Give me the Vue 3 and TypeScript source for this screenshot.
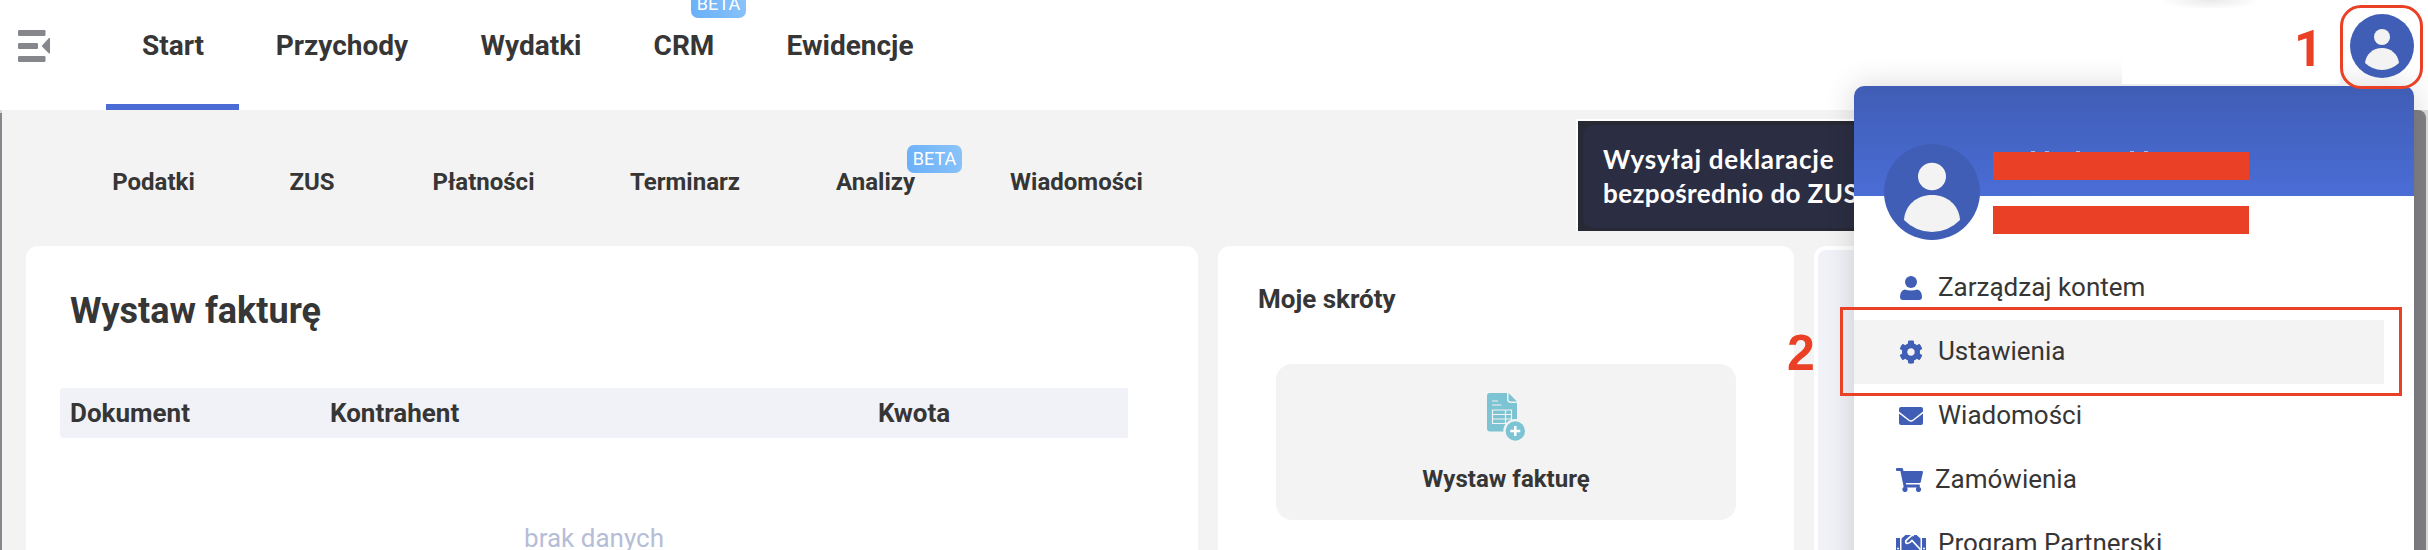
<script setup lang="ts">
interface NavItem { label: string; left: number; width: number; active?: boolean; beta?: boolean }
const mainNav: NavItem[] = [
  { label: 'Start', left: 142, width: 62, active: true },
  { label: 'Przychody', left: 276, width: 132 },
  { label: 'Wydatki', left: 481, width: 100 },
  { label: 'CRM', left: 653, width: 62, beta: true },
  { label: 'Ewidencje', left: 786, width: 128 },
]
const subNav: NavItem[] = [
  { label: 'Podatki', left: 112, width: 83 },
  { label: 'ZUS', left: 289, width: 46 },
  { label: 'Płatności', left: 432, width: 103 },
  { label: 'Terminarz', left: 630, width: 110 },
  { label: 'Analizy', left: 836, width: 79, beta: true },
  { label: 'Wiadomości', left: 1010, width: 133 },
]
// Distance between the end of the previous entry and the start of this one
const gap = (list: NavItem[], i: number): string =>
  `${list[i].left - (i ? list[i - 1].left + list[i - 1].width : 0)}px`

const menu = [
  { label: 'Zarządzaj kontem', icon: 'user' },
  { label: 'Ustawienia', icon: 'gear', active: true },
  { label: 'Wiadomości', icon: 'mail' },
  { label: 'Zamówienia', icon: 'cart' },
  { label: 'Program Partnerski', icon: 'partner' },
]
</script>

<template>
  <div class="screen">
    <header class="topbar">
      <svg class="burger" viewBox="0 0 32 32"><g fill="#86878d"><rect width="27.5" height="6" rx="1.2" /><rect y="13" width="20" height="6" rx="1.2" /><rect y="26" width="27.5" height="6" rx="1.2" /><path d="M32 8v15.5h-1L24 16.500v-1L31 8z" /></g></svg>
      <nav class="nav main">
        <a v-for="(n, i) in mainNav" :key="n.label" :class="{ active: n.active }" :style="{ marginLeft: gap(mainNav, i), width: n.width + 'px' }">{{ n.label }}<span v-if="n.beta" class="beta">BETA</span></a>
      </nav>
    </header>

    <main class="body">
      <div class="subbar">
        <nav class="nav sub">
          <a v-for="(n, i) in subNav" :key="n.label" :style="{ marginLeft: gap(subNav, i), width: n.width + 'px' }">{{ n.label }}<span v-if="n.beta" class="beta">BETA</span></a>
        </nav>
        <div class="banner"><div class="banner-in"><span>Wysyłaj deklaracje</span><br /><span class="l2">bezpośrednio do ZUS</span></div></div>
      </div>
      <div class="cards">
        <section class="card invoices">
          <h1>Wystaw fakturę</h1>
          <div class="thead"><span>Dokument</span><span>Kontrahent</span><span>Kwota</span></div>
          <p>brak danych</p>
        </section>
        <section class="card shortcuts">
          <h2>Moje skróty</h2>
          <div class="tile">
            <svg viewBox="0 0 40 50" width="40" height="50">
              <path fill="#7cc3d3" d="M3 0H20V6q0 4 4 4H30V38.500H3q-3 0-3-3V3Q0 0 3 0z" />
              <path fill="#7cc3d3" d="M21.500 0L30 8.500H24q-2.500 0-2.500-2.500z" />
              <path stroke="#f3f3f3" stroke-width="1.200" fill="none" d="M5 8h6M5 12h9.500M5.500 17h19v13.500h-19zM5.500 21.500h19M5.500 26h19M18.500 17v13.500" />
              <circle cx="28.300" cy="38" r="12" fill="#f3f3f3" /><circle cx="28.300" cy="38" r="9.700" fill="#7cc3d3" />
              <path d="M28.300 33v10M23.300 38h10" stroke="#fff" stroke-width="2.500" />
            </svg>
            <b>Wystaw fakturę</b>
          </div>
        </section>
        <section class="card promo"></section>
      </div>
    </main>
    <div class="edge left"></div>
    <div class="edge right"><i></i></div>

    <aside class="dropdown">
      <div class="head"></div>
      <ul>
        <li v-for="m in menu" :key="m.label" :class="[m.icon, { active: m.active }]">
          <span class="ic">
            <svg v-if="m.icon === 'user'" width="22" height="24" viewBox="0 0 22 24"><ellipse cx="11" cy="6" rx="6" ry="6" /><path d="M5 13.500q2 1 6 1t6-1q5 1 5 7.500 0 3-3 3H3q-3 0-3-3 0-6.500 5-7.500z" /></svg>
            <svg v-else-if="m.icon === 'gear'" width="24" height="24" viewBox="0 0 512 512"><path d="M487.400 315.700l-42.600-24.600c4.300-23.200 4.300-47 0-70.200l42.600-24.600c4.900-2.800 7.100-8.600 5.500-14-11.100-35.600-30-67.800-54.700-94.600-3.800-4.100-10-5.100-14.800-2.300L380.800 110c-17.900-15.400-38.500-27.300-60.800-35.100V25.800c0-5.600-3.900-10.500-9.400-11.700-36.700-8.200-74.300-7.800-109.200 0-5.500 1.200-9.400 6.100-9.400 11.700V75c-22.200 7.900-42.800 19.800-60.800 35.100L88.700 85.500c-4.900-2.800-11-1.900-14.800 2.300-24.700 26.700-43.600 58.900-54.700 94.600-1.700 5.400.6 11.200 5.500 14L67.300 221c-4.300 23.200-4.300 47 0 70.200l-42.600 24.600c-4.900 2.800-7.100 8.600-5.500 14 11.100 35.600 30 67.800 54.700 94.600 3.800 4.100 10 5.100 14.800 2.300l42.600-24.600c17.900 15.400 38.500 27.300 60.800 35.100v49.200c0 5.600 3.900 10.500 9.400 11.700 36.700 8.200 74.300 7.800 109.200 0 5.500-1.200 9.400-6.100 9.400-11.700v-49.200c22.200-7.900 42.800-19.800 60.800-35.100l42.600 24.600c4.900 2.800 11 1.900 14.800-2.300 24.700-26.700 43.600-58.900 54.700-94.600 1.500-5.500-.7-11.300-5.600-14.100zM256 336c-44.100 0-80-35.900-80-80s35.900-80 80-80 80 35.900 80 80-35.900 80-80 80z" /></svg>
            <svg v-else-if="m.icon === 'mail'" width="24" height="18" viewBox="0 0 24 18"><path d="M2 0h20q2 0 2 2v2.500L14 12.500q-2 1.500-4 0L0 4.500V2Q0 0 2 0zM0 6.500l9.500 7.300q2.500 1.700 5 0L24 6.500V16q0 2-2 2H2q-2 0-2-2z" /></svg>
            <svg v-else-if="m.icon === 'cart'" width="27" height="24" viewBox="0 0 576 512"><path d="M528.100 301.300l47.300-208C578.800 78.300 567.400 64 552 64H159.200l-9.200-44.800C147.800 8 137.900 0 126.500 0H24C10.700 0 0 10.700 0 24v16c0 13.300 10.700 24 24 24h69.900l70.200 343.400C147.300 417.100 136 435.200 136 456c0 30.900 25.100 56 56 56s56-25.100 56-56c0-15.700-6.400-29.800-16.800-40h209.600C430.400 426.200 424 440.300 424 456c0 30.900 25.100 56 56 56s56-25.100 56-56c0-22.200-12.900-41.300-31.600-50.400l5.500-24.300c3.400-15-8-29.300-23.400-29.300H218.100l-6.500-32h293.100c11.200 0 20.900-7.800 23.400-18.700z" /></svg>
            <svg v-else width="30" height="24" viewBox="0 -2 30 24"><path d="M0 4h4v15H0zM26 4h4v15h-4zM5.500 4.500L9.500 1h11l4 3.500V18l-3 4h-13l-3-4z" /><path d="M18 1.500h-2.500L10 6.500q-1 2.500 1.500 3 2 0 4.500-3l8.500 9" fill="none" stroke="#fff" stroke-width="1.700" /><circle cx="2" cy="14.500" r="1" fill="#fff" /><circle cx="28" cy="14.500" r="1" fill="#fff" /></svg>
          </span>{{ m.label }}
        </li>
      </ul>
    </aside>
    <div class="shade"></div>
    <div class="patch"></div>
    <div class="glow"></div>
    <div class="person"><svg viewBox="0 0 96 96"><circle cx="48" cy="48" r="48" fill="#405eb6" /><ellipse cx="48" cy="32.500" rx="14" ry="13.700" fill="#f3f3f3" /><path d="M20 76C21 61 33 51 48 51S75 61 76 76Q64 88 48 88T20 76z" fill="#f3f3f3" /></svg></div>
    <div class="ticks"><i></i><i></i><i></i><i></i><i></i></div>
    <div class="redact one"></div>
    <div class="redact two"></div>
    <div class="person small"><svg viewBox="0 0 96 96"><circle cx="48" cy="48" r="48" fill="#405eb6" /><ellipse cx="48" cy="34.500" rx="12" ry="12" fill="#f3f3f3" /><path d="M22.500 73.500C24 60 35 51 48 51S72 60 73.500 73.500Q62 84 48 84T22.500 73.500z" fill="#f3f3f3" /></svg></div>
    <div class="frame avatar-frame"></div>
    <div class="frame item-frame"></div>
    <span class="num n1">1</span>
    <span class="num n2">2</span>
  </div>
</template>

<style>
body { margin: 0; overflow: hidden; }
</style>
<style scoped>
* { box-sizing: border-box; }
.screen { position: relative; width: 2428px; height: 550px; overflow: hidden; background: #f3f3f3; font-family: Roboto, "Liberation Sans", sans-serif; color: #363636; }
.topbar { height: 110px; background: #fff; display: flex; position: relative; }
.burger { width: 32px; height: 32px; margin: 30px 0 0 18px; }
.nav { display: flex; font-weight: 700; white-space: nowrap; }
.nav a { position: relative; flex: none; display: flex; justify-content: center; }
.main { margin-left: -50px; font-size: 28px; line-height: 92px; }
.main .active::after { content: ""; position: absolute; left: -36px; right: -35px; bottom: 0; height: 6px; background: #4a6cd4; }
.beta { position: absolute; width: 55px; height: 28px; border-radius: 7px; background: linear-gradient(70deg, #69aff8, #8cc4f9); color: #fff; font-size: 18px; line-height: 28px; font-weight: 400; text-align: center; }
.main .beta { left: 38px; top: -10px; }
.sub .beta { left: 71px; top: 35px; }
.subbar { display: flex; height: 136px; }
.sub { width: 1576px; font-size: 24px; line-height: 145px; }
.banner { width: 600px; height: 112px; margin-top: 9px; border: 2px solid #fff; border-bottom: 0; background: #272934; padding: 4px 5px; }
.banner-in { height: 103px; border-radius: 10px; background: #2b2d42; color: #fff; padding: 18px 20px; font: 700 26px/33.500px Lato, sans-serif; white-space: nowrap; }
.banner-in span { letter-spacing: .75px; }
.banner-in .l2 { letter-spacing: .4px; }
.cards { display: flex; gap: 20px; padding-left: 26px; height: 304px; }
.card { background: #fff; border-radius: 12px 12px 0 0; flex: none; }
.invoices { width: 1172px; padding: 51px 70px 0 34px; }
h1 { margin: 0 0 0 10px; font-size: 36px; line-height: 28px; }
.thead { margin-top: 63px; height: 50px; display: grid; grid-template-columns: 260px 548px 1fr; padding-left: 10px; border-radius: 4px 0 0 4px; background: #f1f2f8; font-size: 26px; font-weight: 700; line-height: 50px; }
.invoices p { margin: 84px 0 0; text-align: center; font-size: 26px; line-height: 32px; color: #b6bdd7; }
.shortcuts { width: 576px; padding: 38px 58px 0; }
h2 { margin: 0 0 0 -18px; font-size: 26px; line-height: 31px; }
.tile { margin-top: 49px; height: 156px; border-radius: 16px; background: #f3f3f3; display: flex; flex-direction: column; align-items: center; padding-top: 29px; font-size: 24px; line-height: 28px; }
.tile svg { margin-right: -2px; }
.tile b { margin-top: 22px; }
.promo { width: 580px; border: 4px solid #fff; border-bottom: 0; background: #f0f2f8; }
.edge { position: absolute; top: 110px; height: 440px; }
.edge.left { left: 0; width: 2px; background: #86868c; border-top: 3px solid #d8d8da; }
.edge.right { left: 2414px; width: 14px; background: #dededf; }
.edge.right i { display: block; width: 12px; height: 440px; background: #818186; border-radius: 0 8px 0 0; }
.dropdown { position: absolute; left: 1854px; top: 86px; width: 560px; height: 500px; border-radius: 10px; overflow: hidden; background: #fff; z-index: 2; }
.shade { position: absolute; left: 1854px; top: 86px; width: 560px; height: 500px; border-radius: 10px; box-shadow: 0 0 30px rgba(0, 0, 0, .16); z-index: 1; }
.patch { position: absolute; left: 2122px; top: 8px; width: 218px; height: 76px; background: #fff; z-index: 1; }
.glow { position: absolute; left: 2160px; top: 0; width: 100px; height: 8px; background: radial-gradient(ellipse 50px 10px at 50% 0, #e9e9e9, #fff); z-index: 1; }
.head { height: 110px; background: linear-gradient(#405db5, #4a6dd6); }
ul { list-style: none; margin: 60px 30px 0 0; padding: 0; }
li { height: 64px; display: flex; align-items: center; padding: 0 0 2px 42px; font-size: 26px; white-space: nowrap; }
li.active { background: #f3f3f3; }
.ic { width: 30px; margin-right: 12px; padding-top: 2px; display: flex; align-items: center; justify-content: center; }
.ic svg { fill: #405eb6; display: block; }
.cart .ic { width: 27px; }
.person, .ticks, .redact, .frame, .num { position: absolute; z-index: 3; }
.person { left: 1884px; top: 144px; width: 96px; height: 96px; }
.person svg { display: block; width: 100%; height: 100%; }
.person.small { left: 2350px; top: 14px; width: 64px; height: 64px; }
.ticks { left: 2031px; top: 151px; width: 117px; height: 1px; display: flex; gap: 10px; }
.ticks i { width: 4px; background: #a9b9e8; }
.ticks i:nth-child(3) { margin-left: 17px; }
.ticks i:nth-child(4) { margin-left: 40px; }
.redact { left: 1993px; width: 256px; height: 28px; background: #ea4026; }
.one { top: 152px; }
.two { top: 206px; }
.frame { border: 3px solid #ea4026; }
.avatar-frame { left: 2340px; top: 5px; width: 83px; height: 84px; border-radius: 21px; }
.item-frame { left: 1840px; top: 307px; width: 562px; height: 89px; }
.num { color: #ea4026; font: 700 50px/50px "Liberation Sans", Arial, sans-serif; }
.n1 { left: 2294px; top: 24px; font-family: Roboto, sans-serif; }
.n2 { left: 1787px; top: 328px; }
</style>
